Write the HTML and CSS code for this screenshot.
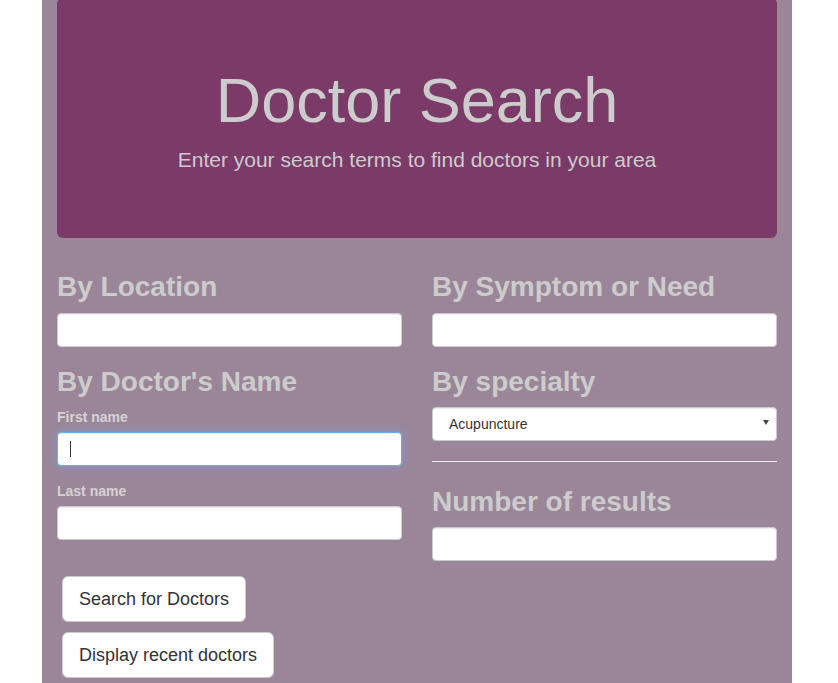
FILE: index.html
```html
<!DOCTYPE html>
<html>
<head>
<meta charset="utf-8">
<title>Doctor Search</title>
<link rel="stylesheet" href="styles.css">
</head>
<body>
<div class="container">
  <div class="jumbotron">
    <h1>Doctor Search</h1>
    <p>Enter your search terms to find doctors in your area</p>
  </div>
  <div class="row">
    <div class="col">
      <h2>By Location</h2>
      <input class="form-control" type="text">
      <h2 class="spaced">By Doctor's Name</h2>
      <div class="form-group">
        <label>First name</label>
        <div class="caret-wrap">
          <input class="form-control focused" type="text">
        </div>
      </div>
      <div class="form-group">
        <label>Last name</label>
        <input class="form-control" type="text">
      </div>
      <div class="buttons">
        <button class="btn">Search for Doctors</button>
        <button class="btn">Display recent doctors</button>
      </div>
    </div>
    <div class="col">
      <h2>By Symptom or Need</h2>
      <input class="form-control" type="text">
      <h2 class="spaced">By specialty</h2>
      <div class="select-wrap">
        <select class="form-control select">
          <option>Acupuncture</option>
        </select>
      </div>
      <hr>
      <h2 class="after-hr">Number of results</h2>
      <input class="form-control" type="text">
    </div>
  </div>
</div>
</body>
</html>
```

FILE: styles.css
```css
html, body {
  margin: 0;
  padding: 0;
  background: #ffffff;
  font-family: "Liberation Sans", Arial, sans-serif;
  font-size: 14px;
  line-height: 1.42857;
  color: #333;
  overflow: hidden;
}

.container {
  width: 750px;
  box-sizing: border-box;
  margin: -2px 0 0 42px;
  padding: 0 15px 40px;
  background: #9b8699;
}

.jumbotron {
  background: #7b3a68;
  border-radius: 6px;
  padding: 48px 60px;
  margin-bottom: 14px;
  text-align: center;
  color: #cccccc;
}

.jumbotron h1 {
  font-size: 63px;
  font-weight: 400;
  line-height: 1.1;
  margin: 20px 0 10px;
}

.jumbotron p {
  font-size: 21px;
  line-height: 30px;
  margin: 0 0 15px;
}

.row {
  display: flex;
  gap: 30px;
}

.col {
  width: 345px;
  display: flex;
  flex-direction: column;
  align-items: stretch;
}

h2 {
  font-size: 28px;
  font-weight: 700;
  line-height: 1.1;
  color: #cccccc;
  margin: 20px 0 9.6px;
}

.form-control {
  display: block;
  box-sizing: border-box;
  width: 100%;
  height: 34px;
  padding: 6px 12px;
  font-family: inherit;
  font-size: 14px;
  color: #555;
  background: #fff;
  border: 1px solid #ccc;
  border-radius: 4px;
  box-shadow: inset 0 1px 1px rgba(0,0,0,.075);
  margin: 0;
  outline: none;
}

.form-control.focused {
  border-color: #66afe9;
  box-shadow: inset 0 1px 1px rgba(0,0,0,.075), 0 0 8px rgba(102,175,233,.6);
}

.form-group {
  margin-bottom: 15px;
}

label {
  display: block;
  font-weight: 700;
  font-size: 14px;
  line-height: 20px;
  color: #d4d4d4;
  margin-bottom: 5px;
}

.caret-wrap {
  position: relative;
}

.caret-wrap::after {
  content: "";
  position: absolute;
  left: 13px;
  top: 9px;
  width: 1px;
  height: 16px;
  background: #333;
}

.select-wrap {
  position: relative;
}

.select {
  -webkit-appearance: none;
  appearance: none;
  padding-left: 16px;
  color: #333;
}

.select-wrap::after {
  content: "";
  position: absolute;
  right: 8px;
  top: 13px;
  width: 0;
  height: 0;
  border-left: 3px solid transparent;
  border-right: 3px solid transparent;
  border-top: 5px solid #444;
}

hr {
  border: 0;
  border-top: 1px solid #eeeeee;
  margin: 20px 0 25px;
  height: 0;
}

h2.after-hr {
  margin-top: 0;
}

.buttons {
  display: flex;
  flex-direction: column;
  align-items: flex-start;
  gap: 10px;
  margin: 21px 0 0 5px;
}

.btn {
  font-family: inherit;
  font-size: 18px;
  line-height: 24px;
  padding: 10px 16px;
  color: #333;
  background: #fff;
  border: 1px solid #ccc;
  border-radius: 6px;
  cursor: pointer;
}
```
